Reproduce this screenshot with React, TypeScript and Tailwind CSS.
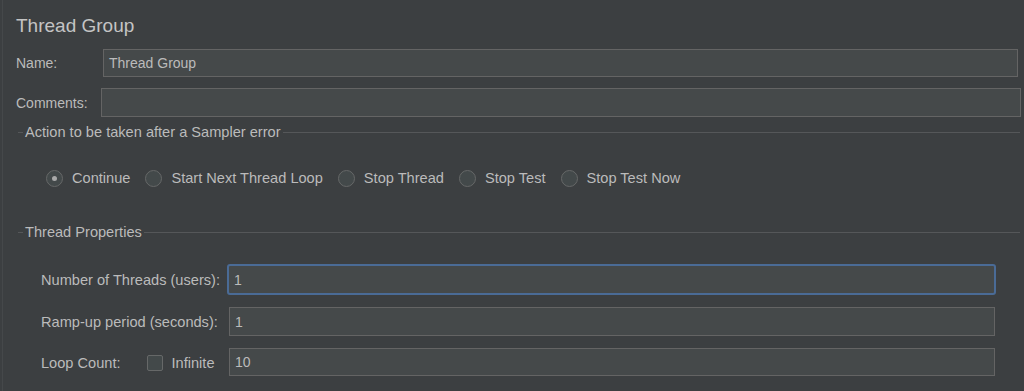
import React from 'react';

const Field: React.FC<{ value?: string; focused?: boolean; className?: string }> = ({ value = '', focused, className = '' }) => (
  <div
    className={
      'flex items-center bg-[#45494a] pl-[5px] text-[14px] text-[#bbbbbb] ' +
      (focused
        ? 'border-[2px] border-[#4a6b96] rounded-[3px] '
        : 'border border-[#646464] ') +
      className
    }
  >
    {value}
  </div>
);

const Radio: React.FC<{ label: string; checked?: boolean }> = ({ label, checked }) => (
  <div className="flex items-center">
    <span className="flex h-[17px] w-[17px] items-center justify-center rounded-full border border-[#666868] bg-[#43494a]">
      {checked && <span className="h-[5px] w-[5px] rounded-full bg-[#a9a9a9]" />}
    </span>
    <span className="ml-[9px]">{label}</span>
  </div>
);

const Legend: React.FC<{ title: string }> = ({ title }) => (
  <div className="flex items-center">
    <div className="h-px w-[5px] bg-[#555759]" />
    <span className="px-[2px]">{title}</span>
    <div className="h-px flex-1 bg-[#555759]" />
  </div>
);

const App: React.FC = () => {
  return (
    <div
      className="h-[391px] w-[1024px] overflow-hidden bg-[#3c3f41] pl-[2px] text-[14.6px] leading-[16px] text-[#bbbbbb]"
      style={{ fontFamily: '"Liberation Sans", Arial, sans-serif' }}
    >
      <div className="h-full border-l border-[#45484a] pt-[14px] pl-[13px] pr-[2px]">
        <div className="h-[24px] text-[19px] leading-[24px] text-[#c4c4c4]">Thread Group</div>

        <div className="mt-[11px] flex h-[28px] items-center">
          <span className="w-[87px] text-[14px]">Name:</span>
          <Field value="Thread Group" className="h-[28px] w-[915px]" />
        </div>

        <div className="mt-[11px] flex h-[29px] items-center">
          <span className="w-[85px] text-[14px]">Comments:</span>
          <Field className="h-[29px] w-[920px]" />
        </div>

        <div className="mt-[7px] pl-[2px] pr-[2px]">
          <Legend title="Action to be taken after a Sampler error" />
          <div className="mt-[29px] flex h-[18px] items-center gap-[15px] pl-[28px]">
            <Radio label="Continue" checked />
            <Radio label="Start Next Thread Loop" />
            <Radio label="Stop Thread" />
            <Radio label="Stop Test" />
            <Radio label="Stop Test Now" />
          </div>
        </div>

        <div className="mt-[37px] pl-[2px] pr-[2px]">
          <Legend title="Thread Properties" />
          <div className="mt-[24px] grid grid-cols-[188px_767px] gap-y-[12px] pl-[23px]">
            <span className="flex h-[31px] items-center">Number of Threads (users):</span>
            <Field value="1" focused className="-ml-[2px] h-[31px] w-[769px]" />

            <span className="flex h-[29px] items-center">Ramp-up period (seconds):</span>
            <Field value="1" className="h-[29px] w-[766px]" />

            <div className="flex h-[29px] items-center">
              <span>Loop Count:</span>
              <span className="ml-[26px] h-[16px] w-[16px] rounded-[2px] border border-[#666868] bg-[#43494a]" />
              <span className="ml-[9px]">Infinite</span>
            </div>
            <Field value="10" className="h-[28px] w-[766px]" />
          </div>
        </div>
      </div>
    </div>
  );
};

export default App;
